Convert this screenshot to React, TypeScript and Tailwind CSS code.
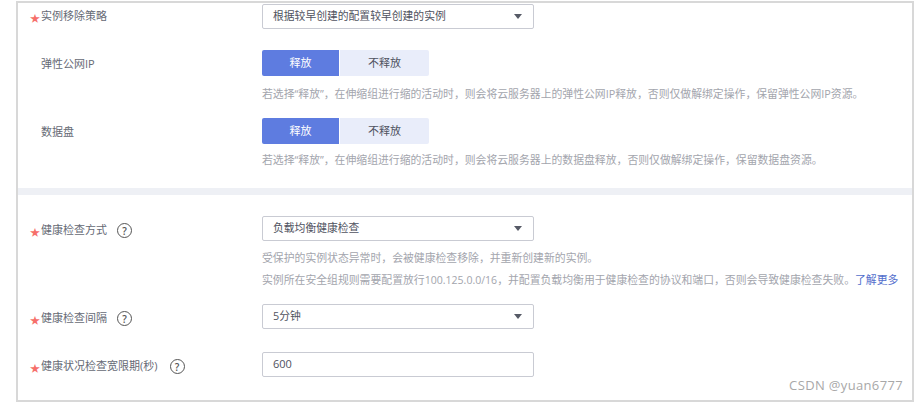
const FONT = '[font-family:"Open_Sans","Noto_Sans_CJK_SC",sans-serif]';

function HelpIcon() {
  return (
    <span className="ml-[10px] flex h-[15px] w-[15px] items-center justify-center rounded-full border-[1.5px] border-[#555] text-[10px] font-semibold leading-none text-[#555]">
      ?
    </span>
  );
}

function Label({ text, required, help, textClass = '', rowClass = 'pt-[4px]' }: { text: string; required?: boolean; help?: boolean; textClass?: string; rowClass?: string }) {
  return (
    <div className={`flex h-[25px] w-[232px] shrink-0 items-center ${rowClass}`}>
      <span className="w-[11px] pt-[2px] text-[10px] leading-none text-[#f66f6a]">{required ? '★' : ''}</span>
      <span className={`text-[11px] text-[#666a75] ${textClass}`}>{text}</span>
      {help && <HelpIcon />}
    </div>
  );
}

function Select({ value }: { value: string }) {
  return (
    <div className="flex h-[25px] w-[272px] items-center justify-between rounded-[2px] border border-[#c9cbd3] pl-[10px] pr-[11px] text-[10.8px] text-[#4f5260]">
      <span>{value}</span>
      <span className="h-0 w-0 border-x-[4px] border-t-[5px] border-x-transparent border-t-[#565a66]" />
    </div>
  );
}

function Toggle() {
  return (
    <div className="flex h-[26px] text-[11px]">
      <div className="flex w-[77px] items-center justify-center rounded-l-[2px] bg-[#5e7ce0] text-white">释放</div>
      <div className="ml-px flex w-[89px] items-center justify-center rounded-r-[2px] bg-[#e9edfa] text-[#4f5260]">不释放</div>
    </div>
  );
}

function Hint({ children }: { children: React.ReactNode }) {
  return <p className="whitespace-nowrap text-[10.85px] leading-[22px] text-[#a3a5ad]">{children}</p>;
}

export default function App() {
  return (
    <div className={`h-[402px] w-[917px] overflow-hidden bg-white pl-[16px] pr-[3px] pt-px ${FONT}`}>
      <div className="relative h-[401px] border-2 border-[#d8d8d8] bg-white pl-[12px] pt-px">
        <div>
          <div className="flex">
            <Label text="实例移除策略" required rowClass="" />
            <Select value="根据较早创建的配置较早创建的实例" />
          </div>
          <div className="mt-[21px] flex">
            <Label text="弹性公网IP" />
            <div>
              <Toggle />
              <div className="mt-[7px]">
                <Hint>若选择“释放”，在伸缩组进行缩的活动时，则会将云服务器上的弹性公网IP释放，否则仅做解绑定操作，保留弹性公网IP资源。</Hint>
              </div>
            </div>
          </div>
          <div className="mt-[13px] flex">
            <Label text="数据盘" />
            <div>
              <Toggle />
              <div className="mt-[5px]">
                <Hint>若选择“释放”，在伸缩组进行缩的活动时，则会将云服务器上的数据盘释放，否则仅做解绑定操作，保留数据盘资源。</Hint>
              </div>
            </div>
          </div>
        </div>

        <div className="-ml-[12px] mt-[17px] h-[7px] bg-[#eef0f5]" />

        <div className="pt-[21px]">
          <div className="flex">
            <Label text="健康检查方式" required help />
            <div>
              <Select value="负载均衡健康检查" />
              <div className="mt-[6px]">
                <Hint>受保护的实例状态异常时，会被健康检查移除，并重新创建新的实例。</Hint>
                <Hint>
                  实例所在安全组规则需要配置放行<span className="text-[10.55px]">100.125.0.0/16</span>，并配置负载均衡用于健康检查的协议和端口，否则会导致健康检查失败。
                  <span className="text-[#526ecc]">了解更多</span>
                </Hint>
              </div>
            </div>
          </div>
          <div className="mt-[13px] flex">
            <Label text="健康检查间隔" required help />
            <Select value="5分钟" />
          </div>
          <div className="mt-[23px] flex">
            <Label text="健康状况检查宽限期(秒)" required help textClass="mr-[2px]" />
            <div className="flex h-[25px] w-[272px] items-center rounded-[2px] border border-[#c9cbd3] pl-[10px] text-[11px] text-[#4f5260]">
              600
            </div>
          </div>
        </div>

        {/* CSDN watermark */}
        <span className="absolute bottom-[5px] right-[9px] text-[13px] tracking-[0.35px] text-[#a8a8a8]">CSDN @yuan6777</span>
      </div>
    </div>
  );
}
